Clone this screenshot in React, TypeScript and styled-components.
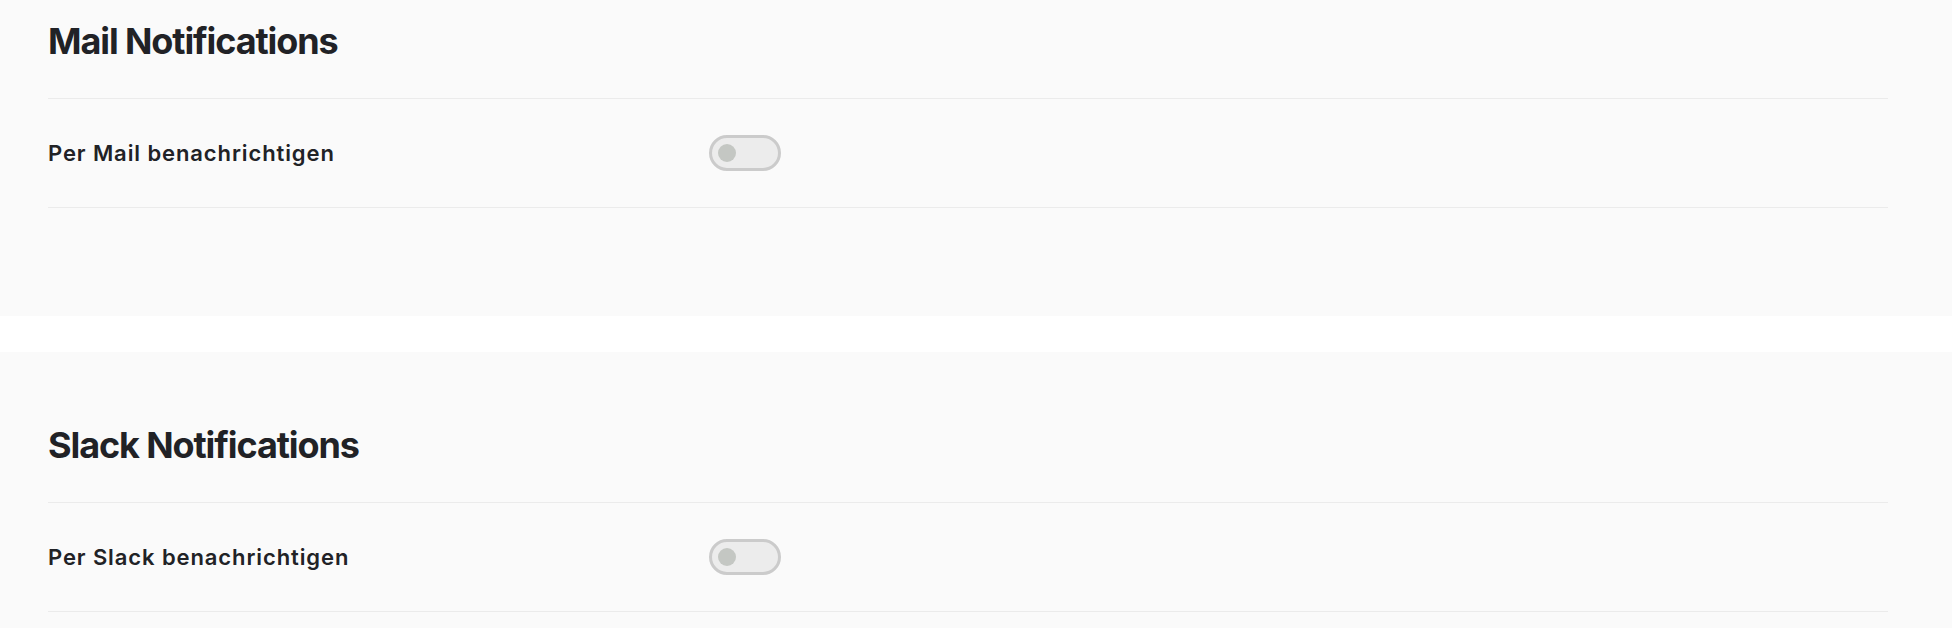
import React from "react";
import styled, { createGlobalStyle } from "styled-components";

type Channel = {
  title: string;
  label: string;
};

const channels: Channel[] = [
  { title: "Mail Notifications", label: "Per Mail benachrichtigen" },
  { title: "Slack Notifications", label: "Per Slack benachrichtigen" },
];

const GlobalStyle = createGlobalStyle`
  html, body {
    margin: 0;
    padding: 0;
    background: #ffffff;
  }

  body {
    font-family: Inter, "Noto Sans", "Liberation Sans", sans-serif;
    color: #212226;
    -webkit-font-smoothing: antialiased;
  }
`;

const App: React.FC = () => {
  const [enabled, setEnabled] = React.useState<boolean[]>(channels.map(() => false));

  const toggle = (index: number) =>
    setEnabled((prev) => prev.map((value, i) => (i === index ? !value : value)));

  return (
    <>
      <GlobalStyle />
      <Page>
        {channels.map((channel, index) => (
          <Section key={channel.title} $first={index === 0}>
            <Heading>{channel.title}</Heading>
            <Rows>
              <Row>
                <Label>{channel.label}</Label>
                <Switch
                  type="button"
                  role="switch"
                  aria-checked={enabled[index]}
                  $on={enabled[index]}
                  onClick={() => toggle(index)}
                >
                  <Knob $on={enabled[index]} />
                </Switch>
              </Row>
            </Rows>
          </Section>
        ))}
      </Page>
    </>
  );
};

const Page = styled.main`
  display: flex;
  flex-direction: column;
  gap: 36px;
`;

const Section = styled.section<{ $first?: boolean }>`
  background: #fafafa;
  padding: ${({ $first }) => ($first ? "20px" : "72px")} 64px 108px 48px;
`;

const Heading = styled.h2`
  margin: 0 0 35px;
  font-size: 36px;
  line-height: 43px;
  font-weight: 700;
  letter-spacing: -1.1px;
`;

const Rows = styled.div`
  border-top: 1px solid #ebebeb;
`;

const Row = styled.div`
  display: grid;
  grid-template-columns: 661px 1fr;
  align-items: center;
  height: 108px;
  border-bottom: 1px solid #ebebeb;
`;

const Label = styled.span`
  font-size: 22px;
  font-weight: 600;
  letter-spacing: 0.9px;
`;

const Switch = styled.button<{ $on: boolean }>`
  display: flex;
  align-items: center;
  justify-content: ${({ $on }) => ($on ? "flex-end" : "flex-start")};
  box-sizing: border-box;
  width: 72px;
  height: 36px;
  padding: 0 6px;
  border: 3px solid ${({ $on }) => ($on ? "#4a8f5c" : "#cbcbcb")};
  border-radius: 18px;
  background: ${({ $on }) => ($on ? "#5ea872" : "#ececec")};
  cursor: pointer;
`;

const Knob = styled.span<{ $on: boolean }>`
  width: 18px;
  height: 18px;
  border-radius: 50%;
  background: ${({ $on }) => ($on ? "#ffffff" : "#c4c7c3")};
`;

export default App;
